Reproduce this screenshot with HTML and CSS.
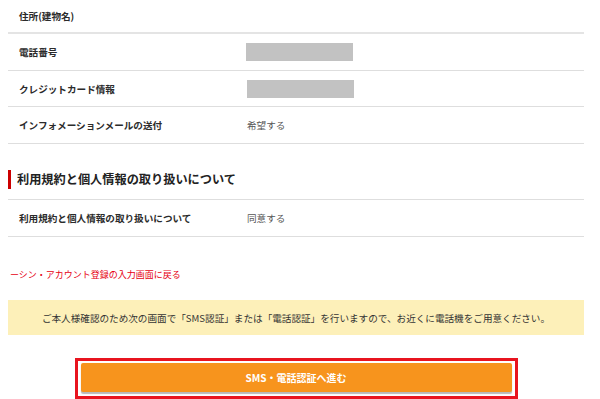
FILE: index.html
```html
<!DOCTYPE html>
<html lang="ja">
<head>
<meta charset="utf-8">
<title>確認</title>
<link rel="stylesheet" href="styles.css">
</head>
<body>
<div class="wrap">
  <div class="row row-first">
    <div class="label">住所(建物名)</div>
    <div class="value"></div>
  </div>
  <div class="row">
    <div class="label">電話番号</div>
    <div class="value"><span class="mask"></span></div>
  </div>
  <div class="row">
    <div class="label">クレジットカード情報</div>
    <div class="value"><span class="mask mask-shift"></span></div>
  </div>
  <div class="row">
    <div class="label">インフォメーションメールの送付</div>
    <div class="value">希望する</div>
  </div>

  <div class="section-head">
    <h2 class="section-title">利用規約と個人情報の取り扱いについて</h2>
  </div>
  <div class="row">
    <div class="label">利用規約と個人情報の取り扱いについて</div>
    <div class="value">同意する</div>
  </div>

  <p class="back-link"><a href="#">ーシン・アカウント登録の入力画面に戻る</a></p>

  <div class="notice">ご本人様確認のため次の画面で「SMS認証」または「電話認証」を行いますので、お近くに電話機をご用意ください。</div>

  <div class="btn-area">
    <div class="btn-frame">
      <button class="btn" type="button">SMS・電話認証へ進む</button>
    </div>
  </div>
</div>
</body>
</html>
```

FILE: styles.css
```css
html, body {
  margin: 0;
  padding: 0;
  background: #fff;
}
body {
  font-family: "Noto Sans CJK JP", "Noto Sans", sans-serif;
  color: #333;
  font-size: 9.6px;
  overflow: hidden;
}
.wrap {
  width: 576px;
  margin-left: 8px;
}
.row {
  display: flex;
  align-items: center;
  height: 35.7px;
  border-bottom: 1px solid #dedede;
}
.row-first {
  height: 32px;
  border-bottom-width: 2px;
  border-bottom-color: #e4e4e4;
}
.label {
  width: 228px;
  padding-left: 11px;
  font-weight: 700;
  color: #2b2b2b;
  line-height: 14px;
}
.value {
  flex: 1;
  color: #555;
  line-height: 14px;
  display: flex;
  align-items: center;
}
.mask {
  display: block;
  width: 107px;
  height: 18px;
  background: #c2c2c2;
  margin-left: -1px;
}
.mask-shift {
  margin-left: 0;
}
.section-head {
  padding-top: 26px;
  padding-bottom: 10px;
  border-bottom: 1px solid #dedede;
}
.section-title {
  margin: 0;
  border-left: 3px solid #cc0000;
  padding-left: 6px;
  font-size: 12.2px;
  line-height: 19px;
  font-weight: 700;
  color: #222;
}
.section-head + .row {
  height: 36px;
}
.back-link {
  margin: 31px 0 0 2px;
  line-height: 14px;
  font-size: 9px;
}
.back-link a {
  color: #e60012;
  text-decoration: none;
}
.notice {
  margin-top: 18px;
  height: 35px;
  background: #fdf0b9;
  display: flex;
  align-items: center;
  justify-content: center;
  color: #333;
  font-size: 9.6px;
}
.btn-area {
  margin-top: 23px;
  display: flex;
  justify-content: center;
}
.btn-frame {
  border: 3px solid #e8141f;
  padding: 2px 3px 4px 3px;
}
.btn {
  display: block;
  width: 431px;
  height: 29px;
  border: 0;
  border-radius: 2px;
  background: #f7941d;
  box-shadow: 0 2px 1px #b9b9b9;
  color: #fff;
  font-family: "Noto Sans CJK JP", "Noto Sans", sans-serif;
  font-size: 10px;
  font-weight: 700;
  padding: 0;
  cursor: pointer;
}
```
